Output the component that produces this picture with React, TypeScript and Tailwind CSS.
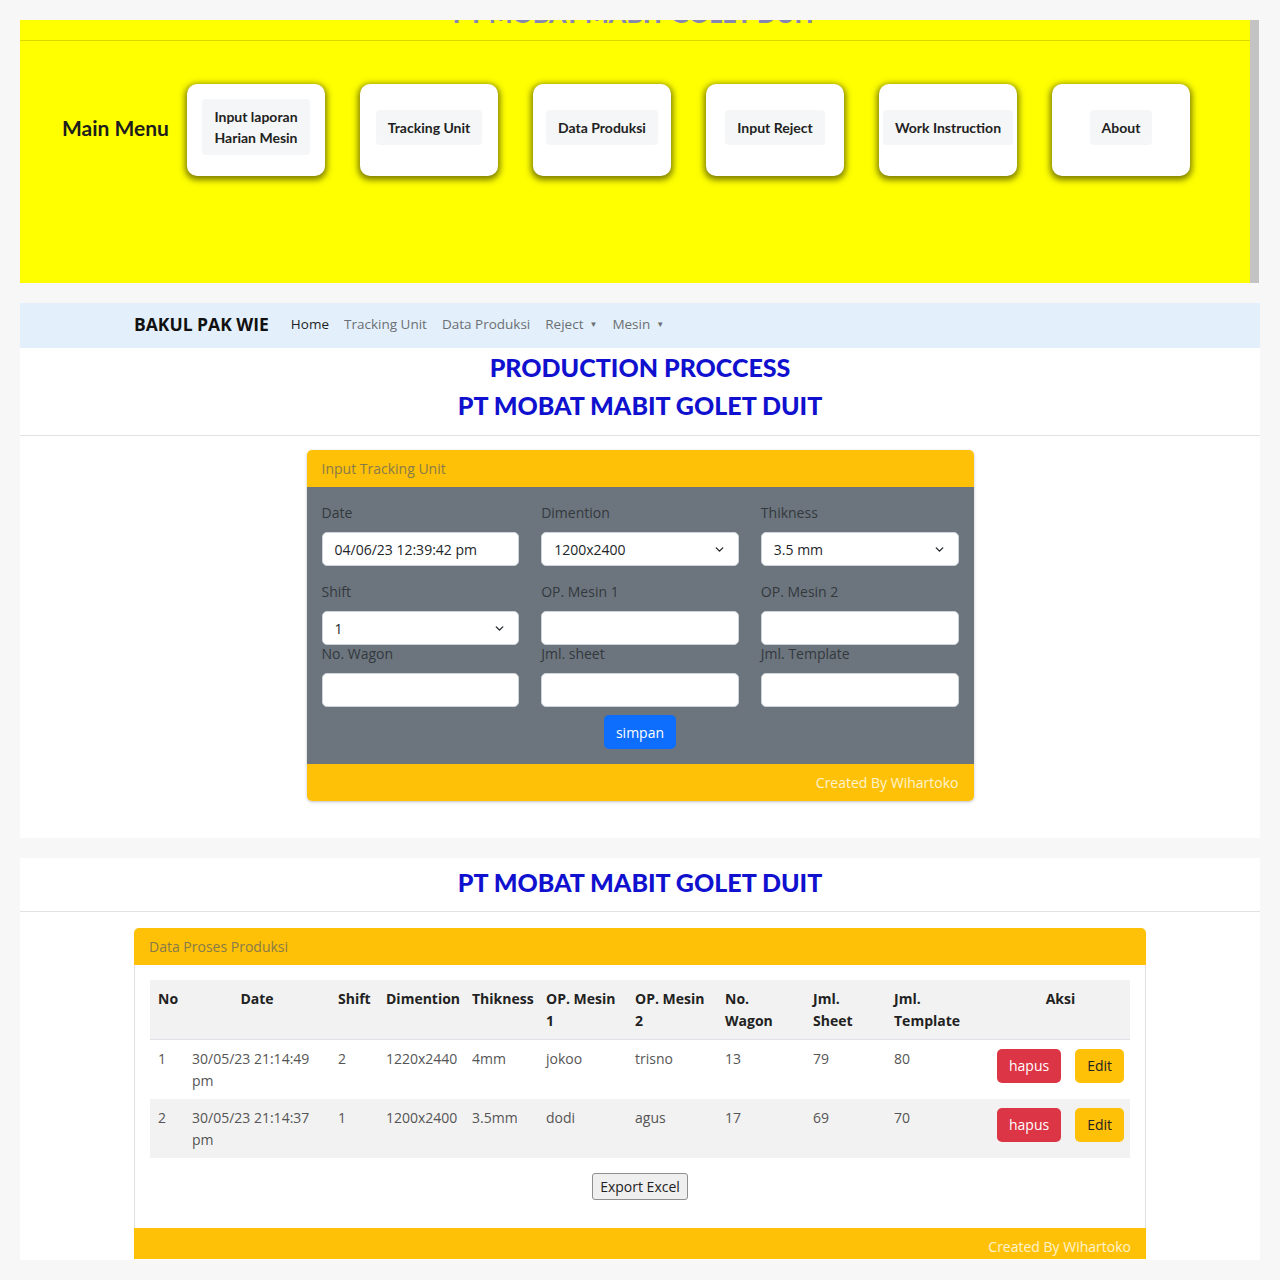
import { ChevronDown } from "lucide-react";

const menuItems = [
  ["Input laporan", "Harian Mesin"],
  ["Tracking Unit"],
  ["Data Produksi"],
  ["Input Reject"],
  ["Work Instruction"],
  ["About"],
];

const rows = [
  {
    no: 1,
    date: "30/05/23 21:14:49 pm",
    shift: 2,
    dim: "1220x2440",
    thick: "4mm",
    op1: "jokoo",
    op2: "trisno",
    wagon: 13,
    sheet: 79,
    template: 80,
  },
  {
    no: 2,
    date: "30/05/23 21:14:37 pm",
    shift: 1,
    dim: "1200x2400",
    thick: "3.5mm",
    op1: "dodi",
    op2: "agus",
    wagon: 17,
    sheet: 69,
    template: 70,
  },
];

function MenuCard({ lines }: { lines: string[] }) {
  return (
    <div className="flex h-[92px] w-[138px] items-center justify-center rounded-[10px] bg-white pb-[6px] shadow-[0_2px_6px_2px_rgba(70,70,0,0.7)]">
      <div className="rounded-[4px] bg-[#f5f6f7] px-3 py-[7px] text-center text-[14px] font-bold leading-[21px] text-[#222]">
        {lines.map((l) => (
          <div key={l}>{l}</div>
        ))}
      </div>
    </div>
  );
}

function Field({
  label,
  value,
  select,
  className = "",
}: {
  label: string;
  value?: string;
  select?: boolean;
  className?: string;
}) {
  return (
    <div className={className}>
      <label className="block text-[14px] leading-[21px] text-[#33383d]">
        {label}
      </label>
      <div className="mt-[9px] flex h-[34px] items-center justify-between rounded-[5px] border border-[#ced4da] bg-white pl-3 pr-[12px] text-[14px] text-[#212529]">
        <span>{value}</span>
        {select && <ChevronDown size={13} strokeWidth={2.5} />}
      </div>
    </div>
  );
}

function Title({ children }: { children: string }) {
  return (
    <h2 className="text-center font-['Lato',sans-serif] text-[25px] font-black leading-[38px] text-[#1010cf]">
      {children}
    </h2>
  );
}

export default function App() {
  return (
    <div className="min-h-[1280px] overflow-hidden bg-[#f7f7f7] pt-5 font-['Open_Sans',sans-serif]">
      {/* screenshot 1: main menu */}
      <section className="ml-5 flex h-[263px] w-[1239px]">
        <div className="flex-1 overflow-hidden bg-[#ffff00] font-['Lato',sans-serif]">
          <div className="flex h-[21px] items-end justify-center overflow-hidden border-b border-[#d9d900]">
            <span className="mb-[15px] text-[25px] font-black leading-[24px] text-[#8686b0]">
              PT MOBAT MABIT GOLET DUIT
            </span>
          </div>
          <div className="mt-[43px] flex items-center pl-[42px]">
            <h2 className="w-[125px] pb-[4px] text-[21px] font-bold text-[#1d1d1d]">Main Menu</h2>
            <div className="flex gap-[35px]">
              {menuItems.map((m) => (
                <MenuCard key={m[0]} lines={m} />
              ))}
            </div>
          </div>
        </div>
        <div className="w-[9px] bg-[#c3c3c3]" />
      </section>

      {/* screenshot 2: input form */}
      <section className="ml-5 mt-5 w-[1240px] bg-white pb-[37px]">
        <nav className="flex h-[45px] items-center bg-[#e3f0fb] pb-[3px] pl-[114px]">
          <span className="text-[17.5px] font-bold text-[#111]">BAKUL PAK WIE</span>
          <ul className="ml-[22px] flex gap-[15px] text-[13.5px] text-[#6b6f73]">
            <li className="text-[#1f1f1f]">Home</li>
            <li>Tracking Unit</li>
            <li>Data Produksi</li>
            <li className="flex items-center gap-[6px]">
              Reject <span className="text-[8px]">▼</span>
            </li>
            <li className="flex items-center gap-[6px]">
              Mesin <span className="text-[8px]">▼</span>
            </li>
          </ul>
        </nav>
        <Title>PRODUCTION PROCCESS</Title>
        <Title>PT MOBAT MABIT GOLET DUIT</Title>
        <hr className="mt-[11px] border-[#e2e2e2]" />

        <div className="mx-auto mt-[14px] w-[667px] overflow-hidden rounded-[5px] shadow-[0_1px_3px_rgba(0,0,0,0.25)]">
          <div className="flex h-[37px] items-center bg-[#ffc107] px-[15px] text-[14px] text-[#877a4a]">
            Input Tracking Unit
          </div>
          <div className="bg-[#6c757d] px-[15px] pb-[15px] pt-[15px]">
            <div className="grid grid-cols-3 gap-x-[22px]">
              <Field label="Date" value="04/06/23 12:39:42 pm" />
              <Field label="Dimention" value="1200x2400" select />
              <Field label="Thikness" value="3.5 mm" select />
              <Field className="mt-[15px]" label="Shift" value="1" select />
              <Field className="mt-[15px]" label="OP. Mesin 1" />
              <Field className="mt-[15px]" label="OP. Mesin 2" />
              <Field className="-mt-[2px]" label="No. Wagon" />
              <Field className="-mt-[2px]" label="Jml. sheet" />
              <Field className="-mt-[2px]" label="Jml. Template" />
            </div>
            <div className="mt-[8px] flex justify-center">
              <button className="h-[34px] rounded-[5px] bg-[#0d6efd] px-3 text-[14px] text-white">
                simpan
              </button>
            </div>
          </div>
          <div className="flex h-[37px] items-center justify-end bg-[#ffc107] px-[15px] text-[14px] text-white/80">
            Created By Wihartoko
          </div>
        </div>
      </section>

      {/* screenshot 3: data table */}
      <section className="ml-5 mt-5 h-[402px] w-[1240px] overflow-hidden bg-white pt-[5px]">
        <Title>PT MOBAT MABIT GOLET DUIT</Title>
        <hr className="mt-[10px] border-[#e2e2e2]" />
        <div className="mx-auto mt-[16px] w-[1012px] overflow-hidden rounded-t-[5px]">
          <div className="flex h-[37px] items-center bg-[#ffc107] px-[15px] text-[14px] text-[#877a4a]">
            Data Proses Produksi
          </div>
          <div className="border-x border-[#e0e0e0] px-[15px] pb-[28px] pt-[15px]">
            <table className="w-full table-fixed border-collapse text-[14px]">
              <colgroup>
                <col className="w-[34px]" />
                <col className="w-[146px]" />
                <col className="w-[48px]" />
                <col className="w-[86px]" />
                <col className="w-[74px]" />
                <col className="w-[89px]" />
                <col className="w-[90px]" />
                <col className="w-[88px]" />
                <col className="w-[81px]" />
                <col className="w-[105px]" />
                <col />
              </colgroup>
              <thead>
                <tr className="border-b border-[#dee2e6] bg-[#f2f2f2] text-left align-top font-bold leading-[22px] text-[#222]">
                  <th className="px-2 pb-[7px] pt-2">No</th>
                  <th className="px-2 pb-[7px] pt-2 text-center">Date</th>
                  <th className="px-2 pb-[7px] pt-2">Shift</th>
                  <th className="px-2 pb-[7px] pt-2">Dimention</th>
                  <th className="px-2 pb-[7px] pt-2">Thikness</th>
                  <th className="px-2 pb-[7px] pt-2">OP. Mesin 1</th>
                  <th className="px-2 pb-[7px] pt-2">OP. Mesin 2</th>
                  <th className="px-2 pb-[7px] pt-2">No. Wagon</th>
                  <th className="px-2 pb-[7px] pt-2">Jml. Sheet</th>
                  <th className="px-2 pb-[7px] pt-2">Jml. Template</th>
                  <th className="px-2 pb-[7px] pt-2 text-center">Aksi</th>
                </tr>
              </thead>
              <tbody>
                {rows.map((r, i) => (
                  <tr
                    key={r.no}
                    className={`align-top leading-[22px] text-[#555] ${i % 2 ? "bg-[#f2f2f2]" : "bg-white"}`}
                  >
                    <td className="px-2 pb-[7px] pt-2">{r.no}</td>
                    <td className="px-2 pb-[7px] pt-2">{r.date}</td>
                    <td className="px-2 pb-[7px] pt-2">{r.shift}</td>
                    <td className="px-2 pb-[7px] pt-2">{r.dim}</td>
                    <td className="px-2 pb-[7px] pt-2">{r.thick}</td>
                    <td className="px-2 pb-[7px] pt-2">{r.op1}</td>
                    <td className="px-2 pb-[7px] pt-2">{r.op2}</td>
                    <td className="px-2 pb-[7px] pt-2">{r.wagon}</td>
                    <td className="px-2 pb-[7px] pt-2">{r.sheet}</td>
                    <td className="px-2 pb-[7px] pt-2">{r.template}</td>
                    <td className="px-2 pb-[7px] pt-[9px]">
                      <div className="flex justify-center gap-[14px]">
                        <button className="h-[34px] rounded-[5px] bg-[#dc3545] px-3 text-white">
                          hapus
                        </button>
                        <button className="h-[34px] rounded-[5px] bg-[#ffc107] px-3 text-[#222]">
                          Edit
                        </button>
                      </div>
                    </td>
                  </tr>
                ))}
              </tbody>
            </table>
            <div className="mt-[15px] flex justify-center">
              <button className="h-[27px] rounded-[3px] border border-[#8f8f8f] bg-[#efefef] px-[7px] text-[14px] text-[#222]">
                Export Excel
              </button>
            </div>
          </div>
          <div className="flex h-[31px] items-center justify-end bg-[#ffc107] px-[15px] pt-[6px] text-[14px] text-white/80">
            Created By Wihartoko
          </div>
        </div>
      </section>
    </div>
  );
}
